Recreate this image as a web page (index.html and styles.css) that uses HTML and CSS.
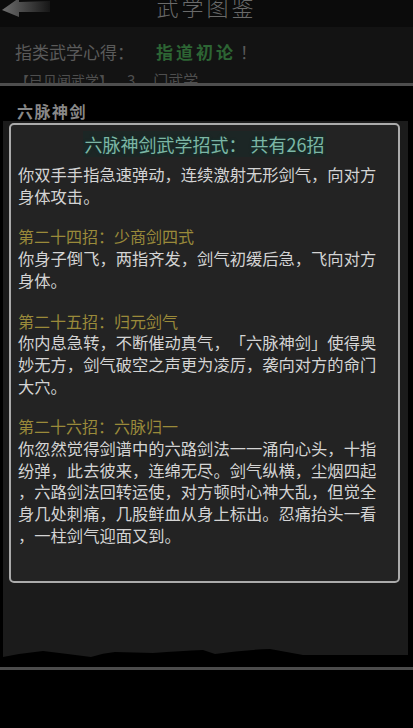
FILE: index.html
```html
<!DOCTYPE html>
<html>
<head>
	<meta charset="UTF-8">
	<title>武学图鉴</title>
	<link rel="stylesheet" href="styles.css">
</head>
<body>
<div id="page">
    <div class="topbar">
        <div class="back">
            <svg width="52" height="18" viewBox="0 0 52 18">
                <defs>
                    <linearGradient id="ag" x1="0" y1="0" x2="1" y2="0">
                        <stop offset="0" stop-color="#6e6e6e"/>
                        <stop offset="0.6" stop-color="#3a3a3a"/>
                        <stop offset="1" stop-color="#161616"/>
                    </linearGradient>
                </defs>
                <path d="M2 10 L19 -2 L19 2 L50 1 L50 12 L19 12 L19 17 Z" fill="url(#ag)"/>
            </svg>
        </div>
        <div class="title">武学图鉴</div>
        <div></div>
    </div>

    <div class="info">
        <div class="info-line">指类武学心得：<span class="green">指道初论</span><span class="excl">！</span></div>
        <div class="info-line small">【已见闻武学】<span class="num">3</span><span class="unit">门武学</span></div>
    </div>

    <div class="main">
        <div class="skill-name">六脉神剑</div>
        <div class="panel">
            <div class="dialog">
                <div class="dlg-title"><span>六脉神剑武学招式：&nbsp;共有26招</span></div>

                <div class="para">
                    <div class="ln">你双手手指急速弹动，连续激射无形剑气，向对方</div>
                    <div class="ln">身体攻击。</div>
                </div>

                <div class="para">
                    <div class="ln gold">第二十四招：少商剑四式</div>
                    <div class="ln">你身子倒飞，两指齐发，剑气初缓后急，飞向对方</div>
                    <div class="ln">身体。</div>
                </div>

                <div class="para">
                    <div class="ln gold">第二十五招：归元剑气</div>
                    <div class="ln">你内息急转，不断催动真气，「六脉神剑」使得奥</div>
                    <div class="ln">妙无方，剑气破空之声更为凌厉，袭向对方的命门</div>
                    <div class="ln">大穴。</div>
                </div>

                <div class="para">
                    <div class="ln gold">第二十六招：六脉归一</div>
                    <div class="ln">你忽然觉得剑谱中的六路剑法一一涌向心头，十指</div>
                    <div class="ln">纷弹，此去彼来，连绵无尽。剑气纵横，尘烟四起</div>
                    <div class="ln">，六路剑法回转运使，对方顿时心神大乱，但觉全</div>
                    <div class="ln">身几处刺痛，几股鲜血从身上标出。忍痛抬头一看</div>
                    <div class="ln">，一柱剑气迎面又到。</div>
                </div>
            </div>
            <svg class="hills" width="405" height="20" viewBox="0 0 405 20" preserveAspectRatio="none">
                <path d="M0 17 Q20 13 40 11 Q65 14 88 17 Q100 13 112 12 L150 13 Q178 11 200 10 L212 14 Q240 10 267 9 L300 15 L405 15 L405 20 L0 20 Z" fill="#000"/>
            </svg>
        </div>
        <div class="rule"></div>
    </div>
</div>
</body>
</html>
```

FILE: styles.css
```css
body{
    margin: 0;
    background-color: #060606;
    font-family: "Noto Sans CJK SC", "Noto Sans", sans-serif;
}
#page{
    width: 413px;
    height: 728px;
    overflow: hidden;
    display: flex;
    flex-direction: column;
}
.topbar{
    height: 27px;
    background-color: #0b0b0b;
    display: grid;
    grid-template-columns: 1fr auto 1fr;
    overflow: hidden;
}
.back{
    line-height: 0;
}
.title{
    font-size: 22px;
    line-height: 22px;
    margin-top: -5px;
    color: #6a6a6a;
    letter-spacing: 3px;
    font-weight: 300;
}
.info{
    height: 56px;
    background-color: #131313;
    padding-left: 15px;
    overflow: hidden;
    border-bottom: 3px solid #4e4e4e;
}
.info-line{
    font-size: 17px;
    line-height: 24px;
    color: #5a5a5a;
    margin-top: 13px;
    white-space: nowrap;
}
.info-line.small{
    font-size: 14px;
    margin-top: 4px;
    color: #4e4e4e;
}
.num{
    margin-left: 14px;
    font-size: 15px;
}
.unit{
    margin-left: 18px;
    font-size: 15px;
}
.green{
    color: #2d6534;
    font-weight: bold;
    margin-left: 22px;
    letter-spacing: 3px;
}
.excl{
    margin-left: 4px;
}
.main{
    flex: 1;
    background-color: #000;
    display: flex;
    flex-direction: column;
}
.skill-name{
    font-size: 16px;
    line-height: 20px;
    font-weight: bold;
    color: #888;
    letter-spacing: 1.5px;
    padding: 15px 0 0 17px;
    height: 20px;
}
.panel{
    margin: 0 5px 0 3px;
    background-color: #1b1b1b;
    padding: 2px 8px 0 6px;
    display: flex;
    flex-direction: column;
}
.dialog{
    height: 450px;
    border: 2px solid #ababab;
    border-radius: 5px;
    background-color: #232323;
    padding: 6px 0 0 7px;
}
.dlg-title{
    text-align: center;
    line-height: 26px;
    height: 26px;
    padding-right: 7px;
}
.dlg-title span{
    font-size: 18px;
    color: #7db6a5;
    background-color: #1c2625;
    text-shadow: 0 0 3px #0f3a30;
    padding: 0 1px;
}
.para{
    margin-top: 19px;
}
.para:nth-child(2){
    margin-top: 7px;
}
.ln{
    font-size: 16.3px;
    line-height: 21.7px;
    color: #d4d4d4;
    white-space: nowrap;
    text-spacing-trim: space-all;
}
.gold{
    color: #9a8a3a;
    font-size: 16px;
}
.hills{
    display: block;
    margin: 57px -8px 0 -6px;
}
.rule{
    margin-top: 7px;
    height: 3px;
    background-color: #4b4b4b;
}
```
